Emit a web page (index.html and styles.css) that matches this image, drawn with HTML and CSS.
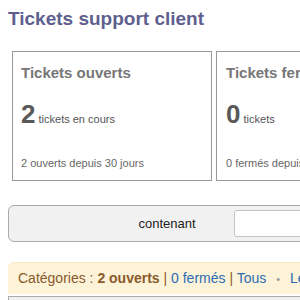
FILE: index.html
```html
<!DOCTYPE html>
<html>
<head>
    <title>Tickets support client</title>
    <link rel="stylesheet" href="styles.css">
</head>
<body>
    <h1>Tickets support client</h1>

    <div class="stats">
        <div class="stat-box">
            <h2>Tickets ouverts</h2>
            <p class="count"><span class="num">2</span> tickets en cours</p>
            <p class="since">2 ouverts depuis 30 jours</p>
        </div>
        <div class="stat-box">
            <h2>Tickets fermés</h2>
            <p class="count"><span class="num">0</span> tickets</p>
            <p class="since">0 fermés depuis 30 jours</p>
        </div>
    </div>

    <form class="search">
        <label for="q">contenant</label>
        <input type="text" id="q">
    </form>

    <div class="categories">
        <span class="cat-label">Catégories : </span><strong>2 ouverts</strong>
        <span class="sep">|</span> <a href="#">0 fermés</a>
        <span class="sep">|</span> <a href="#">Tous</a>
        <span class="dot">•</span> <a href="#">Les miens</a>
    </div>
    <div class="ticket-list"></div>
</body>
</html>
```

FILE: styles.css
```css
html, body { overflow: hidden; }
body { font-family: "Liberation Sans", Arial, sans-serif; margin: 0; padding: 0 8px; background: #fff; }
h1 { font-size: 19px; line-height: 22px; color: #5e5f8e; margin: 8px 0 0 0; white-space: nowrap; }

.stats { display: flex; gap: 4px; margin: 21px 0 0 4px; }
.stat-box { flex: none; width: 200px; height: 130px; box-sizing: border-box; border: 1px solid #9a9a9a; padding: 12px 8px 0 8px; white-space: nowrap; }
.stat-box + .stat-box { padding-left: 9px; }
.stat-box h2 { font-size: 15px; line-height: 18px; color: #777; margin: 0; }
.count { margin: 18px 0 0 0; font-size: 11px; line-height: 28px; color: #555; }
.num { font-size: 26px; font-weight: bold; color: #595959; }
.since { margin: 23px 0 0 0; font-size: 11px; line-height: 14px; color: #666; }

.search { display: flex; align-items: center; margin: 24px -20px 0 0; padding: 4px 0 4px 93px; border: 1px solid #aaa; border-radius: 6px; background: #f1f1f1; }
.search label { flex: none; width: 130px; text-align: center; font-size: 13px; line-height: 15px; color: #222; }
.search input { flex: 1; min-width: 0; margin: 0 0 0 2px; height: 27px; box-sizing: border-box; border: 1px solid #c4c4c4; border-radius: 3px; background: #fff; }

.categories { margin: 20px -40px 0 0; padding: 7px 10px; font-size: 14px; line-height: 16px; color: #8a5a2c; background: #fcf3d8; border-top: 1px solid #f6e8bd; border-radius: 6px 6px 0 0; white-space: nowrap; }
.categories strong { color: #8a5a2c; }
.categories a { color: #2f6db5; text-decoration: none; }
.sep { color: #8a5a2c; }
.dot { color: #999; margin: 0 6px; font-size: 11px; }
.ticket-list { margin: 2px -20px 0 0; height: 40px; border: 1px solid #aaa; background: #f0f0f0; }
```
